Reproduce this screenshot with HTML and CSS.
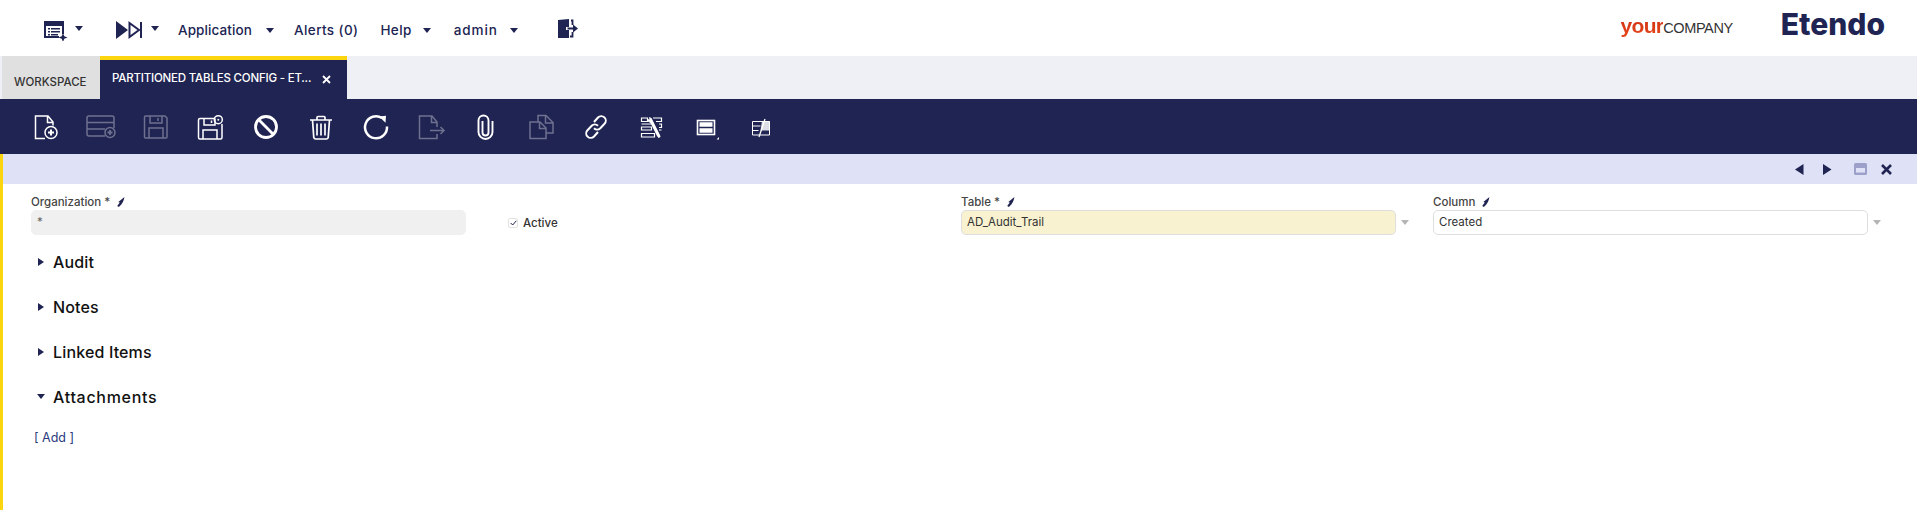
FILE: index.html
```html
<!DOCTYPE html>
<html lang="en">
<head>
<meta charset="utf-8">
<title>Partitioned Tables Config</title>
<link rel="stylesheet" href="styles.css">
</head>
<body>
<header class="topbar">
  <svg class="top-icon i-menu" width="24" height="20" viewBox="0 0 24 20"><path fill="#202452" fill-rule="evenodd" d="M0 0h20v13h-2v-8H2v10h13v2H0z"/><path fill="#202452" d="M4 7h2v1.500H4zM7 7h9v1.500H7zM4 10h2v1.500H4zM7 10h9v1.500H7zM4 13h2v1.500H4zM7 13h7v1.500H7z"/><path fill="#202452" d="M19 12l1.300 3.200 3.200 1.300-3.200 1.300L19 21l-1.300-3.200-3.200-1.300 3.200-1.300z"/></svg>
  <span class="caret c-menu"></span>
  <svg class="top-icon i-next" width="26" height="18" viewBox="0 0 26 18"><path fill="#202452" d="M0 0l12 9L0 18z"/><path fill="none" stroke="#202452" stroke-width="2" d="M13.500 2l9.500 7-9.500 7z"/><path fill="#202452" d="M24 1h2v16h-2z"/></svg>
  <span class="caret c-next"></span>
  <span class="menu m-app">Application</span><span class="caret c-app"></span>
  <span class="menu m-alerts">Alerts (0)</span>
  <span class="menu m-help">Help</span><span class="caret c-help"></span>
  <span class="menu m-admin">admin</span><span class="caret c-admin"></span>
  <svg class="top-icon i-exit" width="20" height="20" viewBox="0 0 20 20"><path fill="#202452" d="M0 1l11-1v8H8v3h3v8L0 19z"/><path fill="none" stroke="#202452" stroke-width="1.800" d="M13 1.500h1.500V6M14.500 13v4.500H12M9.500 9.500h6"/><path fill="#202452" d="M15 5.500l5 4-5 4z"/></svg>
  <div class="logos">
    <span class="logo-your"><b>your</b>COMPANY</span>
    <span class="logo-etendo">Etendo</span>
  </div>
</header>

<nav class="tabs">
  <div class="tab tab-workspace">WORKSPACE</div>
  <div class="tab tab-active"><span>PARTITIONED TABLES CONFIG - ET...</span><svg width="9" height="9" viewBox="0 0 9 9"><path stroke="#fff" stroke-width="1.800" d="M1 1l7 7M8 1L1 8"/></svg></div>
</nav>

<div class="toolbar">
  <button class="tb"><svg viewBox="0 0 30 30"><path d="M14 26.500H4.500V4H17l5 6v3.500M16.500 4v6.500H22"/><circle cx="20" cy="20.500" r="6"/><path d="M17 20.500h6M20 17.500v6" stroke-width="2"/></svg></button>
  <button class="tb off"><svg viewBox="0 0 30 30"><path d="M19 24H3a2 2 0 0 1-2-2V6a2 2 0 0 1 2-2h23a2 2 0 0 1 2 2v10M1 10.500h27M1 17h18"/><circle cx="24" cy="20.500" r="5"/><path d="M21.500 20.500h5M24 18v5" stroke-width="1.800"/></svg></button>
  <button class="tb off"><svg viewBox="0 0 30 30"><path d="M3.500 5a1 1 0 0 1 1-1H24l2 2v19a1 1 0 0 1-1 1H4.500a1 1 0 0 1-1-1zM9 4v7h12V4M17 6v3M8 26V16h14v10"/></svg></button>
  <button class="tb"><svg viewBox="0 0 30 30"><path d="M18 6.500H4a1.500 1.500 0 0 0-1.500 1.500v17.500A1.500 1.500 0 0 0 4 27h20.500a1.500 1.500 0 0 0 1.500-1.500V12M8 6.500V13h11V6.500M15.500 8.500V11M7 27V18h14v9"/><circle cx="22.300" cy="7.700" r="4"/><circle class="dot" cx="22.300" cy="7.700" r="1"/></svg></button>
  <button class="tb"><svg viewBox="0 0 30 30"><g stroke-width="2.800"><circle cx="15" cy="15" r="10.500"/><path d="M7.800 7.800l14.400 14.400"/></g></svg></button>
  <button class="tb"><svg viewBox="0 0 30 30"><path stroke-width="1.700" d="M4 8h22M11 8V5.500a1 1 0 0 1 1-1h6a1 1 0 0 1 1 1V8M6.500 8l1.300 17.500A2 2 0 0 0 9.800 27h10.400a2 2 0 0 0 2-1.500L23.500 8M11 11.500V23.500M15 11.500V23.500M19 11.500V23.500"/></svg></button>
  <button class="tb"><svg viewBox="0 0 30 30"><path stroke-width="2.500" d="M26 14.500A11 11 0 1 1 21 6"/><path class="solid" stroke="none" d="M18 4.500l7-.8-.5 7z"/></svg></button>
  <button class="tb off"><svg viewBox="0 0 30 30"><path d="M21 15V10l-5-6H3.500v22.500H21V22M15.500 4v6.500H21M14 18.500h14M24.500 15l3.500 3.500-3.500 3.500"/></svg></button>
  <button class="tb"><svg viewBox="0 0 30 30"><path stroke-width="1.900" d="M11.500 9v11.500a3 3 0 0 0 6 0V8.500a5 5 0 0 0-10 0V20a7 7 0 0 0 14 0V9"/></svg></button>
  <button class="tb off"><svg viewBox="0 0 30 30"><path d="M11 10H4v16.500h16V16l-6-6h-3zM13.500 10v6.500H20M12 10V3.500h8l7 7V21h-7M19.500 3.500V11H27"/></svg></button>
  <button class="tb"><svg viewBox="0 0 30 30"><path stroke-width="2" d="M13 10l4-4.500a4.500 4.500 0 0 1 6.500 6.300l-4.200 4.500a4.500 4.500 0 0 1-6.300 0M17 20l-4 4.500a4.500 4.500 0 0 1-6.500-6.300l4.200-4.500a4.500 4.500 0 0 1 6.300 0"/></svg></button>
  <button class="tb"><svg viewBox="0 0 30 30"><path stroke-width="1.200" d="M5.500 6h6v3.500h-6zM5.500 12h10M5.500 15h10v3h-10zM5.500 21.500h13v3.500h-13zM17 6h8.500v3.500H20M23 12h2.500v3.500H23M23 18h2.500"/><path class="solid" stroke="none" d="M13 5l2.500 1 1 2 7.500 15 .5 2-2 1-1.500-2-6.500-13-2.500-1.500-.5-2.500 2 .5z"/></svg></button>
  <button class="tb"><svg viewBox="0 0 30 30"><rect x="6.500" y="8.500" width="17" height="14" stroke-width="1.600"/><path class="solid" stroke="none" d="M8.500 10.300h13v4.400h-13zM8.500 16.200h13v4.500h-13zM28 25v2.500h-2.500z"/></svg></button>
  <button class="tb"><svg viewBox="0 0 30 30"><path stroke-width="1" d="M6.500 9.500h17v13.500h-17zM6.500 14h8M6.500 18.500h6"/><path class="solid" stroke="none" d="M16 9h7.500v9.500h-9z" opacity=".85"/><path stroke-width="1.300" d="M19 7l-6 18"/></svg></button>
</div>

<main class="main">
  <div class="statusbar">
    <svg class="sb-ico" width="10" height="11" viewBox="0 0 10 11"><path fill="#202452" d="M8.500 0v11L0 5.500z"/></svg>
    <svg class="sb-ico sb-next" width="10" height="11" viewBox="0 0 10 11"><path fill="#202452" d="M1 0v11l8.500-5.500z"/></svg>
    <svg class="sb-ico sb-max" width="13" height="12" viewBox="0 0 13 12"><rect width="13" height="12" rx="1.500" fill="#9da0c8"/><rect x="2" y="5" width="9" height="4.500" fill="#dfe1f7"/></svg>
    <svg class="sb-ico sb-close" width="11" height="11" viewBox="0 0 11 11"><path stroke="#202452" stroke-width="2.600" d="M1 1l9 9M10 1l-9 9"/></svg>
  </div>

  <form class="form">
    <div class="field">
      <label class="lbl">Organization *<svg class="pin" width="10" height="10" viewBox="0 0 9 9"><path d="M8.500 0C8 3 7 6 3.500 9L2 8l2.300-3L3 4.500z" fill="#202452"/></svg></label>
      <div class="input ro">*</div>
    </div>
    <div class="check">
      <span class="box"><svg width="7" height="6" viewBox="0 0 7 6"><path d="M.7 3l2 2L6.300.8" fill="none" stroke="#202452" stroke-width="1"/></svg></span>
      <span class="check-text">Active</span>
    </div>
    <div class="field">
      <label class="lbl">Table *<svg class="pin" width="10" height="10" viewBox="0 0 9 9"><path d="M8.500 0C8 3 7 6 3.500 9L2 8l2.300-3L3 4.500z" fill="#202452"/></svg></label>
      <div class="with-arrow"><div class="input req">AD_Audit_Trail</div><span class="down"></span></div>
    </div>
    <div class="field">
      <label class="lbl">Column<svg class="pin" width="10" height="10" viewBox="0 0 9 9"><path d="M8.500 0C8 3 7 6 3.500 9L2 8l2.300-3L3 4.500z" fill="#202452"/></svg></label>
      <div class="with-arrow"><div class="input">Created</div><span class="down"></span></div>
    </div>
  </form>

  <section class="sections">
    <div class="sec"><span class="tri"></span>Audit</div>
    <div class="sec"><span class="tri"></span>Notes</div>
    <div class="sec"><span class="tri"></span>Linked Items</div>
    <div class="sec"><span class="tri open"></span><span class="wide">Attachments</span></div>
    <div class="add">[ <a>Add</a> ]</div>
  </section>
</main>
</body>
</html>
```

FILE: styles.css
```css
* { box-sizing: border-box; }
html, body { margin: 0; padding: 0; }
body {
  width: 1917px;
  height: 510px;
  overflow: hidden;
  background: #fff;
  font-family: Inter, "Noto Sans", sans-serif;
  color: #202452;
}

/* top bar */
.topbar {
  height: 56px;
  display: flex;
  align-items: center;
  padding: 0 32px 0 44px;
}
.top-icon { flex: none; }
.i-menu { margin-top: 5px; }
.i-next { margin-top: 3px; }
.i-exit { margin-left: 40px; margin-top: 1px; }
.menu {
  font-size: 13.500px;
  font-weight: 500;
  letter-spacing: .1px;
  white-space: nowrap;
  margin-top: 3px;
}
.caret {
  flex: none;
  width: 0;
  height: 0;
  border-left: 4.500px solid transparent;
  border-right: 4.500px solid transparent;
  border-top: 5px solid #202452;
}
.c-menu { margin: 0 33px 0 7px; }
.c-next { margin: 0 19px 0 9px; }
.c-app { margin: 5px 0 0 14px; }
.c-help { margin: 5px 0 0 11px; }
.c-admin { margin: 5px 0 0 12px; }
.m-alerts { margin-left: 20px; letter-spacing: .4px; }
.m-help { margin-left: 22px; letter-spacing: .4px; }
.m-admin { margin-left: 23px; letter-spacing: .9px; }
.logos {
  margin-left: auto;
  display: flex;
  align-items: center;
  gap: 48px;
}
.logo-your {
  font-family: "Liberation Sans", sans-serif;
  font-size: 14.500px;
  color: #333;
  letter-spacing: -.4px;
  margin-top: -5px;
  white-space: nowrap;
}
.logo-your b {
  font-size: 21px;
  font-weight: 700;
  letter-spacing: -.7px;
  background: linear-gradient(#c92c10, #e8481c);
  -webkit-background-clip: text;
  background-clip: text;
  color: transparent;
}
.logo-etendo {
  font-family: Inter, sans-serif;
  font-weight: 800;
  font-size: 30px;
  line-height: 1;
  margin-top: -8px;
  color: #202452;
}

/* tabs */
.tabs {
  height: 43px;
  background: #eff0f5;
  display: flex;
  padding-left: 2px;
}
.tab {
  font-size: 11.500px;
  font-weight: 500;
  white-space: nowrap;
}
.tab-workspace {
  width: 98px;
  background: #e0e0e0;
  color: #333;
  padding: 19px 0 0 12px;
}
.tab-active {
  width: 247px;
  background: #202452;
  color: #fff;
  border-top: 4px solid #fdd50f;
  padding: 11px 0 0 12px;
  display: flex;
  align-items: flex-start;
  gap: 11px;
  letter-spacing: -.2px;
}
.tab-active svg { margin-top: 4px; }

/* toolbar */
.toolbar {
  height: 55px;
  background: #202452;
  display: flex;
  align-items: center;
  padding-left: 18px;
}
.tb {
  flex: none;
  width: 55px;
  height: 55px;
  padding: 0;
  border: 0;
  background: none;
  display: flex;
  align-items: center;
  justify-content: center;
}
.tb svg {
  width: 30px;
  height: 30px;
  fill: none;
  stroke: #fff;
  stroke-width: 1.500;
  overflow: visible;
}
.tb .solid { fill: #fff; }
.tb .dot { fill: #fff; stroke: none; }
.tb.off svg { opacity: .35; }

/* main */
.main {
  height: 356px;
  border-left: 3px solid #fdd50f;
}
.statusbar {
  height: 30px;
  background: #dfe1f7;
  display: flex;
  align-items: center;
  justify-content: flex-end;
  padding-right: 25px;
}
.sb-next { margin-left: 17px; }
.sb-max { margin-left: 22px; }
.sb-close { margin-left: 14px; }

.form {
  display: grid;
  grid-template-columns: 471px 459px 472px 462px;
  padding: 11px 0 0 28px;
}
.lbl {
  display: flex;
  align-items: center;
  gap: 5px;
  height: 15px;
  padding-bottom: 2px;
  font-size: 11.500px;
  font-weight: 500;
  color: #444;
  white-space: pre;
}
.input {
  width: 435px;
  height: 25px;
  border: 1px solid #dedede;
  border-radius: 5px;
  font-size: 11.500px;
  padding: 0 5px;
  line-height: 22px;
  color: #333;
  flex: none;
}
.ro { background: #f0f0f0; border-color: #f0f0f0; color: #666; }
.req { background: #f8f2d0; }
.with-arrow { display: flex; align-items: center; }
.down {
  margin-left: 5px;
  width: 0;
  height: 0;
  border-left: 4px solid transparent;
  border-right: 4px solid transparent;
  border-top: 5px solid #b5b5b5;
}
.field { display: flex; flex-direction: column; }
.check {
  display: flex;
  align-items: center;
  padding: 15px 0 0 6px;
}
.box {
  width: 10px;
  height: 10px;
  border: 1px solid #e2e2e2;
  border-radius: 2px;
  display: flex;
  align-items: center;
  justify-content: center;
}
.check-text {
  margin-left: 5px;
  font-size: 11.500px;
  font-weight: 500;
  color: #333;
}

.sections { padding: 4px 0 0 35px; }
.sec {
  height: 45px;
  display: flex;
  align-items: center;
  font-size: 16px;
  font-weight: 500;
  color: #111;
  letter-spacing: .15px;
}
.wide { letter-spacing: .7px; }
.tri {
  width: 0;
  height: 0;
  border-top: 4.500px solid transparent;
  border-bottom: 4.500px solid transparent;
  border-left: 6px solid #202452;
  margin-right: 9px;
}
.tri.open {
  border-left: 4.500px solid transparent;
  border-right: 4.500px solid transparent;
  border-top: 5.500px solid #202452;
  border-bottom: 0;
  margin-left: -1px;
  margin-right: 8px;
}
.add {
  margin: 11px 0 0 -4px;
  font-size: 12.500px;
  color: #2a3a7c;
}
.add a { color: #2a3a7c; }
```
